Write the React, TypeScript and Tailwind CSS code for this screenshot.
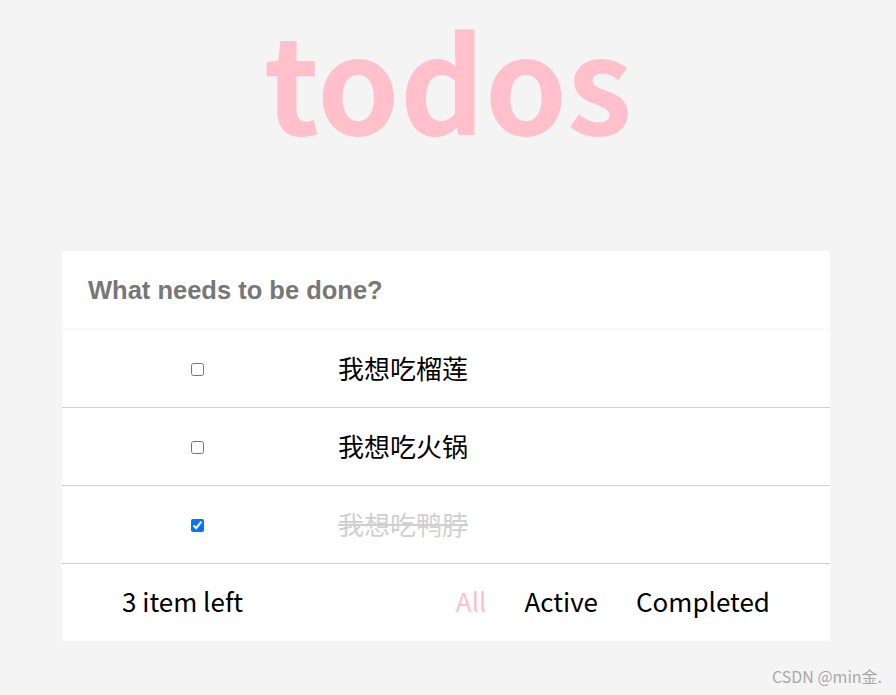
const todos = [
  { id: 1, title: "我想吃榴莲", done: false },
  { id: 2, title: "我想吃火锅", done: false },
  { id: 3, title: "我想吃鸭脖", done: true },
];

const cjk = { fontFamily: '"Noto Sans CJK SC", "Noto Sans", sans-serif' };

export default function App() {
  return (
    <div className="relative h-[695px] w-[896px] overflow-hidden bg-[#f4f4f4]" style={cjk}>
      {/* Title */}
      <h1 className="mt-[-18px] text-center text-[132px] font-bold leading-[192px] text-[#ffc0cb]">
        todos
      </h1>

      {/* Card */}
      <div className="mx-[62px] mt-[77px] w-[768px] bg-white">
        <div className="flex h-[79px] items-center px-[26px] shadow-[inset_0_-3px_2px_rgba(0,0,0,0.025)]">
          <input
            className="w-full bg-transparent text-[25.5px] font-bold text-[#777] outline-none placeholder:text-[#777]"
            style={{ fontFamily: '"Liberation Sans", Arial, sans-serif' }}
            placeholder="What needs to be done?"
          />
        </div>
        {todos.map((t) => (
          <div
            key={t.id}
            className="flex h-[78px] items-center border-b border-[#cfcfcf]"
          >
            <div className="flex w-[270px] justify-center pt-[1px]">
              <input type="checkbox" defaultChecked={t.done} className="m-0 h-[13px] w-[13px]" />
            </div>
            <span
              className={`pb-[2px] pl-[6px] text-[26px] leading-none ${
                t.done ? "text-[#d0d0d0] line-through" : "text-black"
              }`}
            >
              {t.title}
            </span>
          </div>
        ))}
        <div className="flex h-[77px] items-center pb-[4px] text-[26px] text-black">
          <span className="ml-[60px]">3 item left</span>
          <div className="ml-auto mr-[60px] flex gap-[38px]">
            <span className="text-[#ffc0cb]">All</span>
            <span>Active</span>
            <span>Completed</span>
          </div>
        </div>
      </div>

      {/* Watermark */}
      <span className="absolute bottom-[7px] right-[14px] text-[16px] text-[#a8a8a8]">
        CSDN @min金.
      </span>
    </div>
  );
}
